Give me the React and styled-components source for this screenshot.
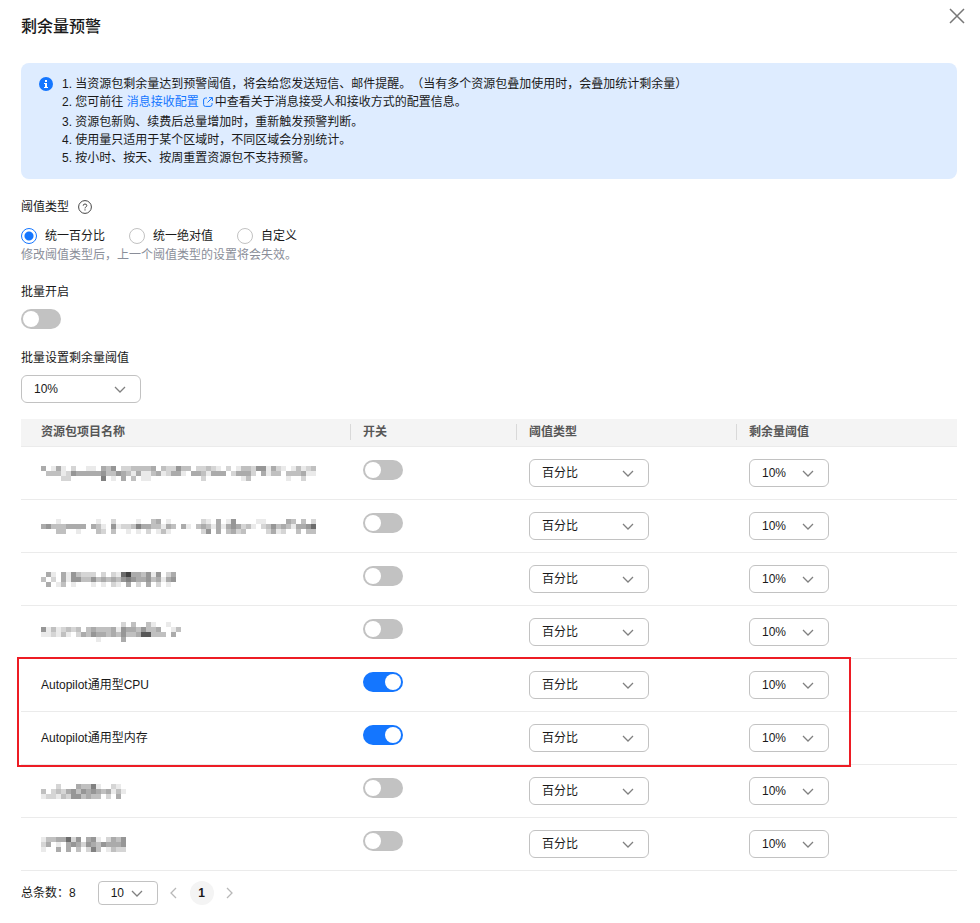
import { useState } from 'react';
import styled, { createGlobalStyle } from 'styled-components';

// 打码的名称：每个数字是一个 5px 的格子，数字越大颜色越深
const ROWS_TOP = [
  {
    id: 1,
    mosaic: [
      '40141020011043502233334032253302232102013325514210131230',
      '03331254444453354314113412441044314440244420413303334110',
      '00002200000060104030110000000000200000001300000001002000',
    ],
  },
  {
    id: 2,
    mosaic: [
      '00010000000100200001003401000000210401500001100004303020',
      '45333444404310512236443314304103431414542310235343144570',
      '00033001000320300101020131000000250403423000024120030330',
    ],
  },
  {
    id: 3,
    mosaic: [
      '041041532220202179443515024',
      '302041553353434356544534145',
      '040130100010102104020402010',
    ],
  },
  {
    id: 4,
    mosaic: [
      '0000000000000000203003100100',
      '5131232303433341544353340013',
      '1121310243544343533488333040',
      '0000000000010000400000000000',
    ],
  },
];

const ROWS_MARKED = [
  { id: 5, name: 'Autopilot通用型CPU' },
  { id: 6, name: 'Autopilot通用型内存' },
];

const ROWS_BOTTOM = [
  {
    id: 7,
    mosaic: ['00020004336100210', '30232453545434131', '12213255343302040'],
  },
  {
    id: 8,
    mosaic: ['13344725045102435', '24010454254354445', '10040403026301322'],
  },
];

const Chevron = ({ direction = 'down' }) => {
  const points = {
    down: '1 1 6 6 11 1',
    left: '6 1 1 6 6 11',
    right: '1 1 6 6 1 11',
  };
  const down = direction === 'down';
  return (
    <svg width={down ? 12 : 7} height={down ? 7 : 12} fill="none" aria-hidden="true">
      <polyline points={points[direction]} stroke="currentColor" strokeWidth="1.3" />
    </svg>
  );
};

const Mosaic = ({ lines }) => (
  <MosaicSvg
    width={lines[0].length * 5}
    height={lines.length * 5}
    shapeRendering="crispEdges"
    aria-hidden="true"
  >
    {lines.map((line, y) =>
      line.split('').map((level, x) => {
        const shade = 255 - Number(level) * 21;
        return (
          level !== '0' && (
            <rect
              key={`${x}-${y}`}
              x={x * 5}
              y={y * 5}
              width="5"
              height="5"
              fill={`rgb(${shade}, ${shade}, ${shade})`}
            />
          )
        );
      })
    )}
  </MosaicSvg>
);

const Dropdown = ({ id, label, options, size }) => (
  <SelectBox $size={size}>
    <Select id={id} aria-label={label} $size={size}>
      {options.map((option) => (
        <option key={option}>{option}</option>
      ))}
    </Select>
    <Chevron />
  </SelectBox>
);

const PackageRow = ({ row, enabled, onToggle }) => (
  <tr>
    <Td>{row.mosaic ? <Mosaic lines={row.mosaic} /> : row.name}</Td>
    <SwitchTd>
      <Switch
        type="checkbox"
        role="switch"
        aria-label="开关"
        checked={enabled}
        onChange={() => onToggle(row.id)}
      />
    </SwitchTd>
    <Td>
      <Dropdown label="阈值类型" options={['百分比', '绝对值']} size="large" />
    </Td>
    <Td>
      <Dropdown label="剩余量阈值" options={['10%', '20%', '30%']} size="medium" />
    </Td>
  </tr>
);

const App = () => {
  const [type, setType] = useState('percent');
  const [batch, setBatch] = useState(false);
  const [enabled, setEnabled] = useState([5, 6]);

  const onToggle = (id) => {
    setEnabled(
      enabled.includes(id) ? enabled.filter((item) => item !== id) : [...enabled, id]
    );
  };

  const renderRows = (rows) =>
    rows.map((row) => (
      <PackageRow
        key={row.id}
        row={row}
        enabled={enabled.includes(row.id)}
        onToggle={onToggle}
      />
    ));

  return (
    <>
      <GlobalStyle />
      <Header>
        <Title>剩余量预警</Title>
        <CloseButton type="button" aria-label="关闭">
          <svg width="16" height="16" fill="none" aria-hidden="true">
            <path d="M1 1l14 14M15 1L1 15" stroke="#777" strokeWidth="1.5" />
          </svg>
        </CloseButton>
      </Header>
      <Body>
        <Notice>
          <InfoIcon width="14" height="14" aria-hidden="true">
            <circle cx="7" cy="7" r="7" fill="#1476ff" />
            <path d="M6 3h2v2H6zM5 6h3v4h1v1H5v-1h1V7H5z" fill="#fff" />
          </InfoIcon>
          <div>
            <Line>
              1. 当资源包剩余量达到预警阈值，将会给您发送短信、邮件提醒。（当有多个资源包叠加使用时，会叠加统计剩余量）
            </Line>
            <LinkLine>
              2. 您可前往{' '}
              <Link href="#message">
                消息接收配置
                <LinkIcon width="10" height="10" fill="none" aria-hidden="true">
                  <path
                    d="M4 1H2.500Q.6 1 .6 3v4.500Q.6 9.400 2.500 9.400H7Q9 9.400 9 7.500V6M6 .6h3.400V4M9.200.8L4.500 5.500"
                    stroke="currentColor"
                  />
                </LinkIcon>
              </Link>
              中查看关于消息接受人和接收方式的配置信息。
            </LinkLine>
            <Line>3. 资源包新购、续费后总量增加时，重新触发预警判断。</Line>
            <Line>4. 使用量只适用于某个区域时，不同区域会分别统计。</Line>
            <Line>5. 按小时、按天、按周重置资源包不支持预警。</Line>
          </div>
        </Notice>

        <Form>
          <Field>
            <Label as="span">
              阈值类型
              <svg width="14" height="14" fill="none" aria-hidden="true">
                <circle cx="7" cy="7" r="6.400" stroke="#444" />
                <path
                  d="M5.200 5.700Q5.200 4 7 4t1.800 1.600Q8.800 6.500 7.800 7 7 7.400 7 8.400M7 9.300v1.200"
                  stroke="#444"
                />
              </svg>
            </Label>
            <div>
              <RadioGroup role="radiogroup" aria-label="阈值类型">
                {[
                  ['percent', '统一百分比'],
                  ['absolute', '统一绝对值'],
                  ['custom', '自定义'],
                ].map(([value, text]) => (
                  <RadioLabel key={value}>
                    <Radio
                      type="radio"
                      name="type"
                      checked={type === value}
                      onChange={() => setType(value)}
                    />
                    {text}
                  </RadioLabel>
                ))}
              </RadioGroup>
              <Hint>修改阈值类型后，上一个阈值类型的设置将会失效。</Hint>
            </div>
          </Field>
          <Field>
            <Label htmlFor="batch">批量开启</Label>
            <Switch
              id="batch"
              type="checkbox"
              role="switch"
              checked={batch}
              onChange={() => setBatch(!batch)}
            />
          </Field>
          <Field>
            <Label htmlFor="batch-value">批量设置剩余量阈值</Label>
            <Dropdown id="batch-value" options={['10%', '20%', '30%']} size="large" />
          </Field>
        </Form>

        <Table>
          <colgroup>
            <col />
            <Col $width={166} />
            <Col $width={220} />
            <Col $width={220} />
          </colgroup>
          <thead>
            <tr>
              <Th>
                <ThText>资源包项目名称</ThText>
              </Th>
              <Th>
                <ThText>开关</ThText>
              </Th>
              <Th>
                <ThText>阈值类型</ThText>
              </Th>
              <Th>
                <ThText>剩余量阈值</ThText>
              </Th>
            </tr>
          </thead>
          <tbody>{renderRows(ROWS_TOP)}</tbody>
          <MarkedBody>{renderRows(ROWS_MARKED)}</MarkedBody>
          <tbody>{renderRows(ROWS_BOTTOM)}</tbody>
        </Table>

        <Pagination aria-label="分页">
          <Total>总条数：8</Total>
          <Dropdown label="每页条数" options={['10', '20', '50']} size="small" />
          <Pages>
            <PageButton type="button" aria-label="上一页" disabled>
              <Chevron direction="left" />
            </PageButton>
            <CurrentPage type="button" aria-current="page">
              1
            </CurrentPage>
            <PageButton type="button" aria-label="下一页" disabled>
              <Chevron direction="right" />
            </PageButton>
          </Pages>
        </Pagination>
      </Body>
    </>
  );
};

export default App;

const SIZES = {
  large: { width: 120, height: 28 },
  medium: { width: 80, height: 28 },
  small: { width: 60, height: 24 },
};

const GlobalStyle = createGlobalStyle`
  * {
    box-sizing: border-box;
  }

  body {
    margin: 0;
    background: #fff;
    color: #191919;
    font-family: 'Liberation Sans', 'Noto Sans CJK SC', sans-serif;
    font-size: 12px;
    line-height: 18px;
    text-spacing-trim: space-all;
  }

  button,
  input,
  select {
    margin: 0;
    font: inherit;
    color: inherit;
  }
`;

const Header = styled.header`
  display: flex;
  justify-content: space-between;
  align-items: flex-start;
  padding: 8px 15px 0 21px;
`;

const Title = styled.h1`
  margin: 7px 0 0;
  font-size: 16px;
  font-weight: 500;
  line-height: 24px;
`;

const CloseButton = styled.button`
  display: flex;
  padding: 0;
  border: none;
  background: none;
  cursor: pointer;
`;

const Body = styled.main`
  padding: 24px 23px 18px 21px;
`;

const Notice = styled.section`
  display: flex;
  gap: 9px;
  padding: 12px 18px;
  border-radius: 8px;
  background: #deecff;
`;

const InfoIcon = styled.svg`
  flex: none;
  margin-top: 2px;
`;

const Line = styled.p`
  margin: 0;
`;

const LinkLine = styled(Line)`
  min-height: 20px;
`;

const Link = styled.a`
  color: #1476ff;
  text-decoration: none;
`;

const LinkIcon = styled.svg`
  margin: 0 2px 0 4px;
  vertical-align: -1px;
`;

const Form = styled.form`
  display: flex;
  flex-direction: column;
  gap: 20px;
  margin: 19px 0 16px;
`;

const Field = styled.div`
  display: flex;
  flex-direction: column;
  align-items: flex-start;
  gap: 8px;
`;

const Label = styled.label`
  display: flex;
  align-items: center;
  gap: 9px;
`;

const RadioGroup = styled.div`
  display: flex;
  gap: 24px;
`;

const RadioLabel = styled.label`
  display: flex;
  align-items: center;
  gap: 8px;
  height: 24px;
`;

const Radio = styled.input`
  appearance: none;
  width: 16px;
  height: 16px;
  border: 1px solid #c2c2c2;
  border-radius: 50%;
  background: #fff;

  &:checked {
    border-color: #1476ff;
    background: radial-gradient(circle, #1476ff 4px, #fff 5px);
  }
`;

const Hint = styled.p`
  margin: 0;
  color: #8a8e99;
  line-height: 15px;
`;

const Switch = styled.input`
  appearance: none;
  display: flex;
  align-items: center;
  width: 40px;
  height: 20px;
  padding: 0 2px;
  border-radius: 10px;
  background: #c2c2c2;
  cursor: pointer;

  &::before {
    content: '';
    width: 16px;
    height: 16px;
    border-radius: 50%;
    background: #fff;
  }

  &:checked {
    justify-content: flex-end;
    background: #1476ff;
  }
`;

const SelectBox = styled.div`
  position: relative;
  width: ${({ $size }) => SIZES[$size].width}px;
  height: ${({ $size }) => SIZES[$size].height}px;
  color: #808080;

  svg {
    position: absolute;
    top: calc(50% - 3px);
    right: 15px;
    pointer-events: none;
  }
`;

const Select = styled.select`
  appearance: none;
  display: block;
  width: 100%;
  height: 100%;
  padding: 0 12px;
  border: 1px solid #c2c2c2;
  border-radius: ${({ $size }) => ($size === 'small' ? 4 : 6)}px;
  background: #fff;
  color: #191919;
`;

const Table = styled.table`
  width: 100%;
  table-layout: fixed;
  border-spacing: 0;
`;

const Col = styled.col`
  width: ${({ $width }) => $width}px;
`;

const Th = styled.th`
  padding: 5px 0 6px;
  border-bottom: 1px solid #ebebeb;
  background: #f4f4f4;
  color: #575757;
  text-align: left;
`;

const ThText = styled.div`
  height: 16px;
  padding-left: 12px;
  border-right: 1px solid #d9d9d9;
  line-height: 16px;

  ${Th}:first-child & {
    padding-left: 20px;
  }

  ${Th}:last-child & {
    border-right: none;
  }
`;

const Td = styled.td`
  height: 53px;
  padding: 0 12px;
  border-bottom: 1px solid #ebebeb;

  &:first-child {
    padding-left: 20px;
  }
`;

const SwitchTd = styled(Td)`
  padding-top: 13px;
  vertical-align: top;
`;

const MosaicSvg = styled.svg`
  display: block;
`;

const MarkedBody = styled.tbody`
  position: relative;

  &::after {
    content: '';
    position: absolute;
    top: -2px;
    right: 106px;
    bottom: -2px;
    left: -4px;
    border: 2px solid #ed1c24;
    pointer-events: none;
  }
`;

const Pagination = styled.nav`
  display: flex;
  align-items: center;
  margin-top: 10px;
`;

const Total = styled.span`
  margin-right: 22px;
`;

const Pages = styled.div`
  display: flex;
  gap: 4px;
  margin-left: 4px;
`;

const PageButton = styled.button`
  display: flex;
  justify-content: center;
  align-items: center;
  width: 24px;
  height: 24px;
  padding: 0;
  border: none;
  border-radius: 50%;
  background: none;
  color: #b8b8b8;
`;

const CurrentPage = styled(PageButton)`
  background: #f4f4f4;
  color: #191919;
  font-weight: 700;
`;
